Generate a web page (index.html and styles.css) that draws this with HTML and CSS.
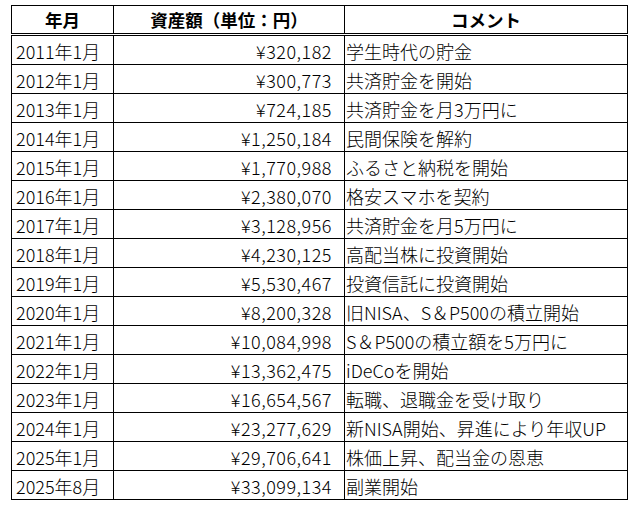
FILE: index.html
```html
<!DOCTYPE html>
<html lang="ja">
<head>
<meta charset="utf-8">
<link rel="stylesheet" href="styles.css">
</head>
<body>
<table class="tbl">
<colgroup><col class="c1"><col class="c2"><col class="c3"></colgroup>
<thead>
<tr><th>年月</th><th>資産額（単位：円）</th><th>コメント</th></tr>
</thead>
<tbody>
<tr><td>2011年1月</td><td class="amt">¥320,182</td><td>学生時代の貯金</td></tr>
<tr><td>2012年1月</td><td class="amt">¥300,773</td><td>共済貯金を開始</td></tr>
<tr><td>2013年1月</td><td class="amt">¥724,185</td><td>共済貯金を月3万円に</td></tr>
<tr><td>2014年1月</td><td class="amt">¥1,250,184</td><td>民間保険を解約</td></tr>
<tr><td>2015年1月</td><td class="amt">¥1,770,988</td><td>ふるさと納税を開始</td></tr>
<tr><td>2016年1月</td><td class="amt">¥2,380,070</td><td>格安スマホを契約</td></tr>
<tr><td>2017年1月</td><td class="amt">¥3,128,956</td><td>共済貯金を月5万円に</td></tr>
<tr><td>2018年1月</td><td class="amt">¥4,230,125</td><td>高配当株に投資開始</td></tr>
<tr><td>2019年1月</td><td class="amt">¥5,530,467</td><td>投資信託に投資開始</td></tr>
<tr><td>2020年1月</td><td class="amt">¥8,200,328</td><td>旧NISA、S＆P500の積立開始</td></tr>
<tr><td>2021年1月</td><td class="amt">¥10,084,998</td><td>S＆P500の積立額を5万円に</td></tr>
<tr><td>2022年1月</td><td class="amt">¥13,362,475</td><td>iDeCoを開始</td></tr>
<tr><td>2023年1月</td><td class="amt">¥16,654,567</td><td>転職、退職金を受け取り</td></tr>
<tr><td>2024年1月</td><td class="amt">¥23,277,629</td><td>新NISA開始、昇進により年収UP</td></tr>
<tr><td>2025年1月</td><td class="amt">¥29,706,641</td><td>株価上昇、配当金の恩恵</td></tr>
<tr><td>2025年8月</td><td class="amt">¥33,099,134</td><td>副業開始</td></tr>
</tbody>
</table>
</body>
</html>
```
FILE: styles.css
```css
html, body {
  margin: 0;
  padding: 0;
  background: #ffffff;
}
body {
  padding: 5px 0 0 11px;
  font-family: "Noto Sans CJK JP", "Noto Sans", sans-serif;
  color: #000000;
}
.tbl {
  border-collapse: collapse;
  table-layout: fixed;
  width: 616px;
  font-size: 18px;
}
.c1 { width: 102px; }
.c2 { width: 231px; }
.c3 { width: 283px; }
.tbl th, .tbl td {
  border: 1px solid #000000;
  white-space: nowrap;
  overflow: hidden;
}
.tbl th {
  font-weight: bold;
  font-size: 17.5px;
  text-align: center;
  height: 27px;
  line-height: 27px;
  padding: 0;
  border-bottom: 3px double #000000;
}
.tbl td {
  font-weight: 300;
  height: 26px;
  line-height: 26px;
  padding: 2px 0 0 4px;
  text-align: left;
}
.tbl td:nth-child(3) {
  padding-left: 1px;
}
.tbl td.amt {
  text-align: right;
  letter-spacing: 0.5px;
  padding-right: 12px;
  padding-left: 0;
}
```
